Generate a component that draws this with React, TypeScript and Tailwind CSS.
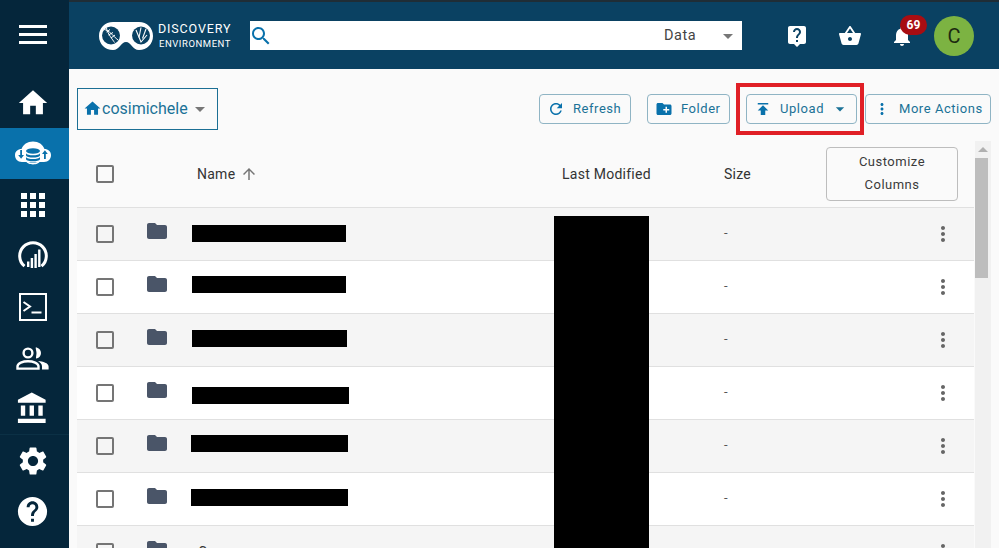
const P = {
  home: "M10 20v-6h4v6h5v-8h3L12 3 2 12h3v8z",
  folder: "M10 4H4c-1.1 0-1.99.9-1.99 2L2 18c0 1.1.9 2 2 2h16c1.1 0 2-.9 2-2V8c0-1.1-.9-2-2-2h-8l-2-2z",
  newFolder: "M20 6h-8l-2-2H4c-1.11 0-1.99.89-1.99 2L2 18c0 1.11.89 2 2 2h16c1.11 0 2-.89 2-2V8c0-1.11-.89-2-2-2zm-1 8h-3v3h-2v-3h-3v-2h3V9h2v3h3v2z",
  publish: "M5 4v2h14V4H5zm0 10h4v6h6v-6h4l-7-7-7 7z",
  refresh: "M17.65 6.35C16.2 4.9 14.21 4 12 4c-4.42 0-7.99 3.58-7.99 8s3.57 8 7.99 8c3.73 0 6.84-2.55 7.73-6h-2.08c-.82 2.33-3.04 4-5.65 4-3.31 0-6-2.69-6-6s2.69-6 6-6c1.66 0 3.14.69 4.22 1.78L13 11h7V4l-2.35 2.35z",
  more: "M12 8c1.1 0 2-.9 2-2s-.9-2-2-2-2 .9-2 2 .9 2 2 2zm0 2c-1.1 0-2 .9-2 2s.9 2 2 2 2-.9 2-2-.9-2-2-2zm0 6c-1.1 0-2 .9-2 2s.9 2 2 2 2-.9 2-2-.9-2-2-2z",
  apps: "M4 8h4V4H4v4zm6 12h4v-4h-4v4zm-6 0h4v-4H4v4zm0-6h4v-4H4v4zm6 0h4v-4h-4v4zm6-10v4h4V4h-4zm-6 4h4V4h-4v4zm6 6h4v-4h-4v4zm0 6h4v-4h-4v4z",
  basket: "M17.21 9l-4.38-6.56c-.19-.28-.51-.42-.83-.42-.32 0-.64.14-.83.43L6.79 9H2c-.55 0-1 .45-1 1 0 .09.01.18.04.27l2.54 9.27c.23.84 1 1.46 1.92 1.46h13c.92 0 1.69-.62 1.93-1.46l2.54-9.27L23 10c0-.55-.45-1-1-1h-4.79zM9 9l3-4.4L15 9H9zm3 8c-1.1 0-2-.9-2-2s.9-2 2-2 2 .9 2 2-.9 2-2 2z",
  bell: "M12 22c1.1 0 2-.9 2-2h-4c0 1.1.89 2 2 2zm6-6v-5c0-3.07-1.64-5.64-4.5-6.32V4c0-.83-.67-1.5-1.5-1.5s-1.5.67-1.5 1.5v.68C7.63 5.36 6 7.92 6 11v5l-2 2v1h16v-1l-2-2z",
  gear: "M19.14 12.94c.04-.3.06-.61.06-.94 0-.32-.02-.64-.07-.94l2.03-1.58c.18-.14.23-.41.12-.61l-1.92-3.32c-.12-.22-.37-.29-.59-.22l-2.39.96c-.5-.38-1.03-.7-1.62-.94l-.36-2.54c-.04-.24-.24-.41-.48-.41h-3.84c-.24 0-.43.17-.47.41l-.36 2.54c-.59.24-1.13.57-1.62.94l-2.39-.96c-.22-.08-.47 0-.59.22L2.74 8.87c-.12.21-.08.47.12.61l2.03 1.58c-.05.3-.09.63-.09.94s.02.64.07.94l-2.03 1.58c-.18.14-.23.41-.12.61l1.92 3.32c.12.22.37.29.59.22l2.39-.96c.5.38 1.03.7 1.62.94l.36 2.54c.05.24.24.41.48.41h3.84c.24 0 .44-.17.47-.41l.36-2.54c.59-.24 1.13-.56 1.62-.94l2.39.96c.22.08.47 0 .59-.22l1.92-3.32c.12-.22.07-.47-.12-.61l-2.01-1.58zM12 15.6c-1.98 0-3.6-1.62-3.6-3.6s1.62-3.6 3.6-3.6 3.6 1.62 3.6 3.6-1.62 3.6-3.6 3.6z",
  help: "M12 2C6.48 2 2 6.48 2 12s4.48 10 10 10 10-4.48 10-10S17.52 2 12 2zm1 17h-2v-2h2v2zm2.07-7.75l-.9.92C13.45 12.9 13 13.5 13 15h-2v-.5c0-1.1.45-2.1 1.17-2.83l1.24-1.26c.37-.36.59-.86.59-1.41 0-1.1-.9-2-2-2s-2 .9-2 2H8c0-2.21 1.79-4 4-4s4 1.79 4 4c0 .88-.36 1.68-.93 2.25z",
  bank: "M4 10v7h3v-7H4zm6 0v7h3v-7h-3zM2 22h19v-3H2v3zm14-12v7h3v-7h-3zm-4.5-9L2 6v2h19V6l-9.5-5z",
  search: "M15.5 14h-.79l-.28-.27C15.41 12.59 16 11.11 16 9.5 16 5.91 13.09 3 9.5 3S3 5.91 3 9.5 5.91 16 9.5 16c1.61 0 3.09-.59 4.23-1.57l.27.28v.79l5 4.99L20.49 19l-4.99-5zm-6 0C7.01 14 5 11.99 5 9.5S7.01 5 9.5 5 14 7.01 14 9.5 11.99 14 9.5 14z",
  up: "M4 12l1.41 1.41L11 7.83V20h2V7.83l5.58 5.59L20 12l-8-8-8 8z",
  liveHelp: "M19 2H5c-1.11 0-2 .9-2 2v14c0 1.1.89 2 2 2h4l3 3 3-3h4c1.1 0 2-.9 2-2V4c0-1.1-.9-2-2-2zm-6 16h-2v-2h2v2zm2.07-7.75l-.9.92C13.45 11.9 13 12.5 13 14h-2v-.5c0-1.1.45-2.1 1.17-2.83l1.24-1.26c.37-.36.59-.86.59-1.41 0-1.1-.9-2-2-2s-2 .9-2 2H8c0-2.21 1.79-4 4-4s4 1.79 4 4c0 .88-.36 1.68-.93 2.25z",
  caret: "M7 10l5 5 5-5z",
};

function Icon({ d, className }: { d: string; className: string }) {
  return (
    <svg viewBox="0 0 24 24" fill="currentColor" className={className}>
      <path d={d} />
    </svg>
  );
}

function NavItem({ active, children }: { active?: boolean; children: React.ReactNode }) {
  return (
    <div className={`h-[51px] flex items-center justify-center pr-[4px] text-white ${active ? "bg-[#0971ab]" : ""}`}>{children}</div>
  );
}

function DataIcon() {
  return (
    <svg viewBox="0 0 36 26" className="w-[36px] h-[26px]">
      <path d="M7 21 C2.5 21 0 18 0 14 C0 10.5 3 8 6.5 8 C8 3.5 12.5 0.5 18 0.5 C23.5 0.5 28 3.5 29.5 8 C33 8 36 10.5 36 14 C36 18 33.5 21 29 21 Z" fill="#fff" />
      <g fill="#0971ab">
        <ellipse cx="18" cy="10" rx="7" ry="2.8" />
        <path d="M11 12.2 C12 15 24 15 25 12.2 V14.4 C24 17.2 12 17.2 11 14.4 Z" />
        <path d="M11 16 C12 18.8 24 18.8 25 16 V18.2 C24 21 12 21 11 18.2 Z" />
        <path d="M5.2 9h1.8v5h2l-2.9 3.8L3.2 14h2z" />
        <path d="M29 18h1.8v-5h2l-2.9-3.8L27 13h2z" />
      </g>
      <path d="M11 20 C12 24.5 24 24.5 25 20 V19.4 C24 22.2 12 22.2 11 19.4 Z" fill="#fff" />
    </svg>
  );
}

function InsightsIcon() {
  return (
    <svg viewBox="0 0 30 30" className="w-[30px] h-[30px]">
      <path d="M6.5 25.2 A13.3 13.3 0 1 1 23.5 25.2" fill="none" stroke="#fff" strokeWidth="3" />
      <g fill="#fff">
        <rect x="9" y="20.5" width="2.4" height="5.5" />
        <rect x="12.7" y="17" width="2.4" height="10" />
        <rect x="16.4" y="13" width="2.4" height="14" />
        <rect x="20.1" y="8.5" width="2.4" height="17.5" />
      </g>
    </svg>
  );
}

function TerminalIcon() {
  return (
    <svg viewBox="0 0 28 28" className="w-[28px] h-[28px]">
      <rect x="1" y="1" width="26" height="26" fill="none" stroke="#fff" strokeWidth="2" />
      <path d="M4.5 9 L11 13.5 L4.5 18" fill="none" stroke="#fff" strokeWidth="2" />
      <rect x="12.5" y="18.5" width="10" height="2" fill="#fff" />
    </svg>
  );
}

function TeamsIcon() {
  return (
    <svg viewBox="0 0 33 24" className="w-[33px] h-[24px]" fill="none" stroke="#fff" strokeWidth="2.4">
      <circle cx="12" cy="7" r="4.4" />
      <path d="M1.5 22.6 V20.5 C1.5 17 7 15.2 12 15.2 C17 15.2 22.5 17 22.5 20.5 V22.6 Z" />
      <path d="M20 1.2 C23.5 2 25 4.5 25 7 C25 9.5 23.5 12 20.5 12.6 C19.5 12.8 20.5 9 20.5 7 C20.5 5 19.2 1.4 20 1.2 Z" fill="#fff" stroke="none" />
      <path d="M22 15 C27 15.5 32.6 17 32.6 20.5 V23.4 H26 V20.5 C26 18 24.5 16.5 22 15 Z" fill="#fff" stroke="none" />
    </svg>
  );
}

function Logo() {
  return (
    <svg viewBox="0 0 54 28" className="w-[54px] h-[28px]">
      <path d="M14 0 H40 C48 0 54 6 54 14 C54 22 48 28 40 28 C33.5 28 32 20 27 20 C22 20 20.5 28 14 28 C6 28 0 22 0 14 C0 6 6 0 14 0 Z" fill="#fff" />
      <circle cx="12" cy="13.5" r="9" fill="#0a4162" />
      <circle cx="42" cy="13.5" r="9" fill="#0a4162" />
      <g stroke="#fff" strokeWidth="1" fill="none">
        <path d="M5 7.5 C10 8 14 14 19 18" />
        <path d="M7.5 6 C8 11 14 18 15.5 20.5" />
        <path d="M7.5 10 L11 7.5 M9.5 13 L14 10.5 M12 16 L16 13" />
      </g>
      <g stroke="#fff" strokeWidth="1.1" fill="none">
        <path d="M37 8 L42 20 L48 13" />
        <path d="M40 15.5 L42 5.5" />
        <path d="M43.5 16.5 L47 7" />
      </g>
    </svg>
  );
}

function ActionButton({ icon, label, caret, className }: { icon: string; label: string; caret?: boolean; className: string }) {
  return (
    <button className={`h-[30px] flex items-center border border-[#8fb4c4] rounded text-[13px] font-normal tracking-[0.55px] text-[#1b7297] ${className}`}>
      <Icon d={icon} className="w-[18px] h-[18px] text-[#0971ab] shrink-0" />
      <span className="ml-[8px]">{label}</span>
      {caret && <Icon d={P.caret} className="w-[20px] h-[20px] ml-[6px] text-[#1b7297]" />}
    </button>
  );
}

const rows = [
  { bar: "w-[154px] ml-0 mt-[-2px]", odd: true },
  { bar: "w-[154px] ml-0 mt-[-6px]", odd: false },
  { bar: "w-[155px] ml-0 mt-[-4px]", odd: true },
  { bar: "w-[157px] ml-0 mt-[4px]", odd: false },
  { bar: "w-[157px] ml-[-1px] mt-[-6px]", odd: true },
  { bar: "w-[157px] ml-[-1px] mt-[-4px]", odd: false },
];

function Checkbox() {
  return <div className="w-[18px] h-[18px] border-2 border-[#757575] rounded-[2px] bg-transparent" />;
}

function Row({ odd, children, dash = true }: { odd: boolean; children: React.ReactNode; dash?: boolean }) {
  return (
    <div className={`h-[53px] shrink-0 flex items-center border-b border-[#e0e0e0] ${odd ? "bg-[#f5f5f5]" : "bg-white"}`}>
      <div className="w-[56px] flex justify-center">
        <Checkbox />
      </div>
      <div className="w-[48px] flex justify-center mt-[-7px]">
        <Icon d={P.folder} className="w-[24px] h-[24px] text-[#4a5568]" />
      </div>
      <div className="w-[373px] pl-[11px]">{children}</div>
      <div className="w-[162px]" />
      <div className="w-[110px] pl-[8px] text-[13px] text-[#555] mt-[-2px]">{dash ? "-" : ""}</div>
      <div className="w-[148px] flex justify-end pr-[19px]">
        <Icon d={P.more} className="w-[24px] h-[24px] text-[#666]" />
      </div>
    </div>
  );
}

export default function App() {
  return (
    <div className="w-screen h-screen overflow-hidden flex font-['Roboto',sans-serif] bg-[#fafafa] relative">
      <aside className="w-[69px] shrink-0 bg-[#05263b] flex flex-col">
        <div className="h-[77px] pb-[9px] pr-[4px] flex items-center justify-center">
          <div className="w-[28px] flex flex-col gap-[5px]">
            <div className="h-[3px] bg-white" />
            <div className="h-[3px] bg-white" />
            <div className="h-[3px] bg-white" />
          </div>
        </div>
        <NavItem><Icon d={P.home} className="w-[34px] h-[34px]" /></NavItem>
        <NavItem active><DataIcon /></NavItem>
        <NavItem><Icon d={P.apps} className="w-[36px] h-[36px]" /></NavItem>
        <NavItem><InsightsIcon /></NavItem>
        <NavItem><TerminalIcon /></NavItem>
        <NavItem><TeamsIcon /></NavItem>
        <NavItem><Icon d={P.bank} className="w-[35px] h-[35px]" /></NavItem>
        <div className="h-px bg-[#0b3045]" />
        <NavItem><Icon d={P.gear} className="w-[34px] h-[34px]" /></NavItem>
        <NavItem><Icon d={P.help} className="w-[35px] h-[35px]" /></NavItem>
      </aside>

      <div className="flex-1 min-w-0 flex flex-col">
        <header className="h-[69px] shrink-0 bg-[#0a4162] border-t-2 border-[#1f2d36] flex items-center">
          <div className="ml-[30px]">
            <Logo />
          </div>
          <div className="ml-[5px] w-[73px] text-white leading-none">
            <div className="text-[12.5px] tracking-[0.85px] text-right mb-[3px]">DISCOVERY</div>
            <div className="text-[9.5px] tracking-[0.55px] text-right">ENVIRONMENT</div>
          </div>
          <div className="ml-[19px] w-[492px] h-[29px] bg-white flex items-center">
            <Icon d={P.search} className="w-[24px] h-[24px] text-[#0971ab] -ml-[1px]" />
            <span className="ml-[391px] text-[14.5px] tracking-[0.5px] text-[#444]">Data</span>
            <Icon d={P.caret} className="w-[24px] h-[24px] text-[#777] ml-[20px]" />
          </div>
          <Icon d={P.liveHelp} className="w-[24px] h-[24px] text-white ml-[43px]" />
          <Icon d={P.basket} className="w-[24px] h-[24px] text-white ml-[29px]" />
          <div className="relative ml-[28px]">
            <Icon d={P.bell} className="w-[24px] h-[24px] text-white" />
            <div className="absolute left-[10px] top-[-9px] w-[27px] h-[20px] rounded-full bg-[#a80d12] text-white text-[12px] font-bold flex items-center justify-center">69</div>
          </div>
          <div className="ml-[20px] w-[40px] h-[40px] rounded-full bg-[#7cb342] flex items-center justify-center text-[20px] text-[#1c2a10]">C</div>
        </header>

        <div className="h-[72px] shrink-0 flex items-center pl-[8px] pt-[8px]">
          <button className="w-[141px] h-[42px] mt-[-1px] border border-[#1b6f94] flex items-center pl-[5px] text-[16px] text-[#1b7297]">
            <Icon d={P.home} className="w-[19px] h-[19px] text-[#0971ab]" />
            <span>cosimichele</span>
            <Icon d={P.caret} className="w-[24px] h-[24px] text-[#777]" />
          </button>
          <ActionButton icon={P.refresh} label="Refresh" className="ml-[321px] w-[92px] pl-[7px]" />
          <ActionButton icon={P.newFolder} label="Folder" className="ml-[16px] w-[83px] pl-[7px]" />
          <ActionButton icon={P.publish} label="Upload" caret className="ml-[16px] w-[111px] pl-[7px]" />
          <ActionButton icon={P.more} label="More Actions" className="ml-[8px] w-[126px] pl-[7px]" />
        </div>

        <div className="flex-1 min-h-0 flex pl-[8px]">
          <div className="w-[897px] relative flex flex-col overflow-hidden">
            <div className="h-[67px] shrink-0 flex items-center border-b border-[#e0e0e0] text-[14px] font-normal tracking-[0.25px] text-[#333]">
              <div className="w-[56px] flex justify-center">
                <Checkbox />
              </div>
              <div className="w-[48px]" />
              <div className="w-[373px] pl-[16px] flex items-center">
                <span>Name</span>
                <Icon d={P.up} className="w-[18px] h-[18px] ml-[5px] text-[#757575]" />
              </div>
              <div className="w-[162px] pl-[8px]">Last Modified</div>
              <div className="w-[110px] pl-[8px]">Size</div>
              <div className="w-[148px] pl-0">
                <button className="w-[132px] h-[54px] mt-[-1px] pb-[2px] border border-[#bdbdbd] rounded text-[13px] leading-[23px] tracking-[0.5px] text-[#3a3a3a]">
                  Customize
                  <br />
                  Columns
                </button>
              </div>
            </div>
            {rows.map((r, i) => (
              <Row key={i} odd={r.odd}>
                <div className={`h-[17px] bg-black ${r.bar}`} />
              </Row>
            ))}
            <Row odd dash={false}>
              <div className="ml-[6px] text-[14px] text-[#333]">Co</div>
            </Row>
            <div className="absolute left-[477px] top-[75px] bottom-0 w-[95px] bg-black" />
          </div>
          <div className="ml-px w-[16px] bg-[#f1f1f1] flex flex-col">
            <div className="h-[17px] flex items-start justify-center pt-[6px]">
              <div className="w-0 h-0 border-l-[5px] border-r-[5px] border-b-[5px] border-l-transparent border-r-transparent border-b-[#b0b0b0]" />
            </div>
            <div className="w-[13px] h-[120px] bg-[#bdbdbd]" />
          </div>
        </div>
      </div>

      <div className="absolute left-[736px] top-[83px] w-[128px] h-[52px] border-4 border-[#e01f26]" />
    </div>
  );
}
